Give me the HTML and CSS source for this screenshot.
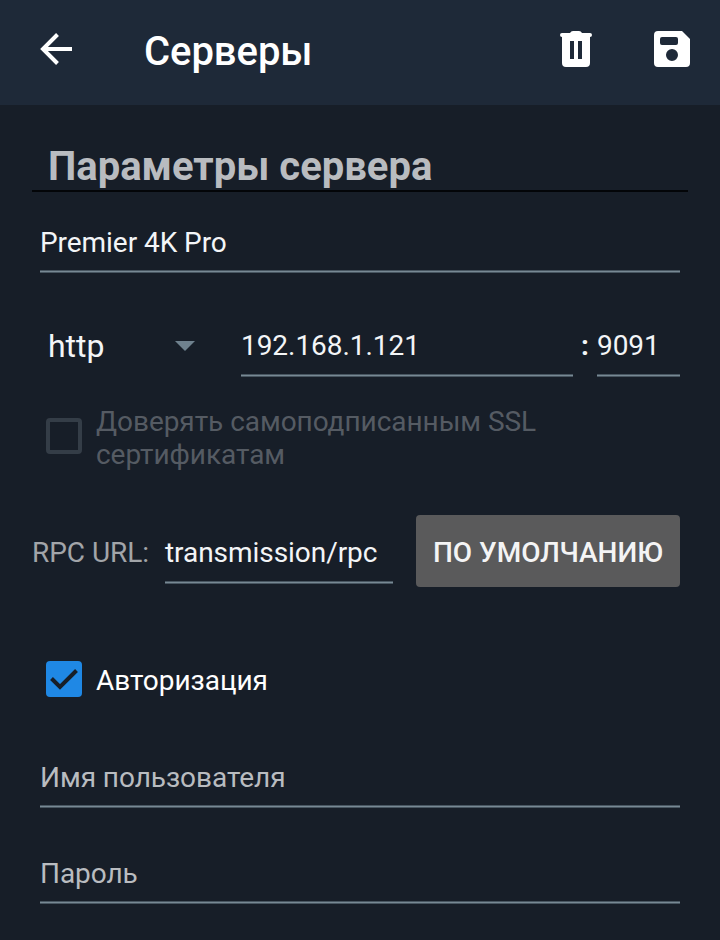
FILE: index.html
```html
<!DOCTYPE html>
<html lang="ru">
<head>
<meta charset="utf-8">
<title>Серверы</title>
<link rel="stylesheet" href="styles.css">
</head>
<body>
<header class="toolbar">
  <svg class="back" viewBox="0 0 48 48" width="48" height="48"><path d="M40 24H11.500M25.500 9.500L11 24L25.500 38.500" fill="none" stroke="#fff" stroke-width="4"/></svg>
  <h1 class="title">Серверы</h1>
  <svg class="delete" viewBox="0 0 32 36" width="32" height="36"><path fill="#fff" fill-rule="evenodd" d="M2 2H10Q11 0 13 0H19Q21 0 22 2H30Q32 2 32 4Q32 6 30 6V32Q30 36 26 36H6Q2 36 2 32V6Q0 6 0 4Q0 2 2 2ZM10 10V28H14V10ZM18 10V28H22V10Z"/></svg>
  <svg class="save" viewBox="0 0 36 36" width="36" height="36"><path fill="#fff" fill-rule="evenodd" d="M4 0H28L36 8V32Q36 36 32 36H4Q0 36 0 32V4Q0 0 4 0ZM8 6Q6 6 6 8V12Q6 14 8 14H22Q24 14 24 12V8Q24 6 22 6ZM18 18A6 6 0 1 0 18 30A6 6 0 1 0 18 18Z"/></svg>
</header>
<main class="form">
  <h2 class="section">Параметры сервера</h2>
  <div class="field name">Premier 4K Pro</div>
  <div class="address">
    <div class="protocol"><span>http</span><svg viewBox="0 0 20 10" width="20" height="10"><path d="M0 0H20L10 10Z" fill="#6f818e"/></svg></div>
    <div class="field host">192.168.1.121</div>
    <span class="colon">:</span>
    <div class="field port">9091</div>
  </div>
  <div class="check disabled">
    <span class="box"></span>
    <span class="check-text">Доверять самоподписанным SSL сертификатам</span>
  </div>
  <div class="rpc">
    <span class="rpc-label">RPC URL:</span>
    <div class="field path">transmission/rpc</div>
    <button class="default" type="button">ПО УМОЛЧАНИЮ</button>
  </div>
  <div class="check auth">
    <span class="box checked"><svg viewBox="0 0 36 36" width="36" height="36"><path d="M5.500 17.500L14 26L30.500 9.500" fill="none" stroke="#171e28" stroke-width="4"/></svg></span>
    <span class="check-text">Авторизация</span>
  </div>
  <div class="field hint user">Имя пользователя</div>
  <div class="field hint password">Пароль</div>
</main>
</body>
</html>
```
FILE: styles.css
```css
* { box-sizing: border-box; }
body {
  margin: 0;
  height: 940px;
  overflow: hidden;
  background: #171e28;
  color: #f3f5f7;
  font: 400 28px/33px Roboto, sans-serif;
  letter-spacing: -0.05px;
}
svg { display: block; flex: none; }
.toolbar {
  display: flex;
  align-items: center;
  height: 105px;
  padding: 0 30px 7px 32px;
  background: #1e2938;
}
.back { margin-right: 64px; }
.title {
  flex: 1;
  margin: 5px 0 0;
  color: #fff;
  font-size: 40px;
  line-height: 47px;
  font-weight: 500;
  white-space: nowrap;
}
.delete { margin-right: 62px; }
.form { padding: 38px 32px 0; }
.section {
  height: 49px;
  margin: 0 0 33px;
  padding-left: 16px;
  border-bottom: 2px solid #030508;
  color: #b9bcc0;
  font-size: 40px;
  line-height: 47px;
  font-weight: 700;
  letter-spacing: 0;
  white-space: nowrap;
}
.field {
  height: 48px;
  white-space: nowrap;
  background: linear-gradient(#485661 0 1px, #788994 1px 2px, #485661 2px) bottom / 100% 3px no-repeat;
}
.name { margin: 0 8px; padding-top: 1px; }
.address {
  display: flex;
  align-items: flex-start;
  margin: 56px 8px 0 16px;
}
.protocol {
  display: flex;
  align-items: center;
  justify-content: space-between;
  width: 147px;
  height: 38px;
  margin: -2px 46px 0 0;
  font-size: 32px;
  line-height: 38px;
}
.host { width: 332px; }
.colon { width: 24px; padding-left: 8px; font-weight: 700; }
.port { width: 83px; }
.check {
  display: flex;
  align-items: center;
  padding-left: 14px;
}
.box {
  flex: none;
  width: 36px;
  height: 36px;
  margin-right: 14px;
  border: 4px solid #343d47;
  border-radius: 4px;
}
.checked { border: 0; background: #1f88e5; }
.disabled { margin-top: 28px; color: #555b63; }
.disabled .box { margin-top: -4px; }
.disabled .check-text { width: 500px; }
.rpc {
  display: flex;
  align-items: center;
  height: 72px;
  margin: 44px 8px 0 0;
}
.rpc-label { width: 133px; margin-top: 3px; color: #a2a5a9; white-space: nowrap; }
.path { width: 228px; margin: 18px 23px 0 0; }
.default {
  width: 264px;
  height: 72px;
  padding: 3px 0 0;
  border: 0;
  border-radius: 4px;
  background: #5a5a5b;
  color: #f4f4f5;
  font: 500 28px/33px Roboto, sans-serif;
  white-space: nowrap;
}
.auth { margin-top: 74px; color: #fff; }
.auth .check-text { padding-top: 3px; }
.hint { margin: 0 8px; padding-top: 1px; color: #b9bcc0; }
.user { margin-top: 63px; }
.password { margin-top: 48px; }
```
